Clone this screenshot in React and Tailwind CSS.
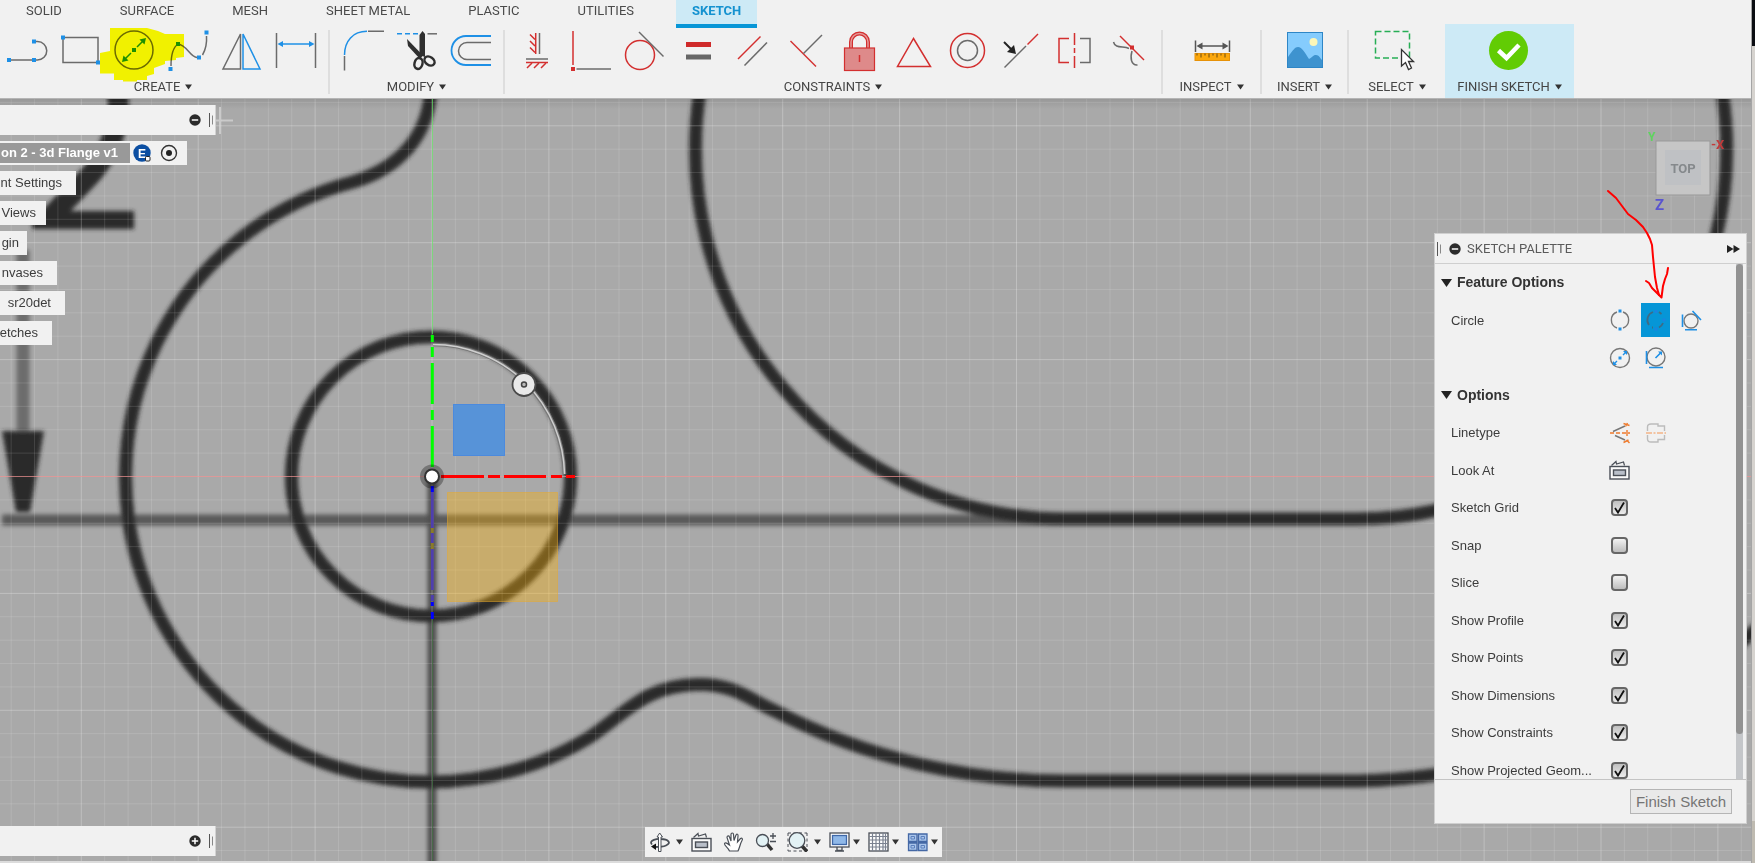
import React from "react";

const GRAY = "#6b6b6b";
const BLUE = "#1e90e6";
const RED = "#d32f2f";

const TABS = ["SOLID", "SURFACE", "MESH", "SHEET METAL", "PLASTIC", "UTILITIES", "SKETCH"];

/* Small square grip centred on a point */
function Dot({ x, y, c = BLUE }) {
  return <rect x={x - 2} y={y - 2} width="4" height="4" fill={c} />;
}

/* Tool icons share one toolbar-wide coordinate space; cx is the icon's centre in it */
function Tool({ name, cx, children }) {
  return (
    <button type="button" aria-label={name} className="block h-11 w-[54px] shrink-0">
      <svg width="54" height="44" viewBox={`${cx - 27} 29 54 44`} fill="none" strokeWidth="1.5">
        {children}
      </svg>
    </button>
  );
}

function Caret() {
  return (
    <svg width="7" height="6" viewBox="0 0 7 6" className="shrink-0">
      <path d="M0 0.5H7L3.5 5.5Z" fill="#333" />
    </svg>
  );
}

function Group({ label, className = "", children }) {
  return (
    <section className={`flex shrink-0 flex-col items-center pb-[3px] pt-[5px] ${className}`}>
      <div className="flex">{children}</div>
      <button type="button" className="mt-1.5 flex h-4 items-center gap-[5px] whitespace-nowrap text-[13px] leading-4 text-[#454545]">
        {label}
        <Caret />
      </button>
    </section>
  );
}

function Separator() {
  return <div className="mt-1.5 h-16 w-0.5 shrink-0 bg-[#dedede]" />;
}

function CreateTools() {
  return (
    <>
      <Tool name="Line" cx={28}>
        <path d="M9 60H34M36 41.500H37.500a9.250 9.250 0 0 1 0 18.500H36" stroke={GRAY} />
        <Dot x={9} y={60} /><Dot x={34} y={60} /><Dot x={34} y={41.5} />
      </Tool>
      <Tool name="Rectangle" cx={82}>
        <rect x="63" y="37.500" width="35" height="25" stroke={GRAY} />
        <Dot x={63} y={37.5} /><Dot x={98} y={62.5} />
      </Tool>
      <Tool name="Circle" cx={136}>
        <circle cx="134" cy="50" r="19" stroke={GRAY} />
        <path d="M125 59L131 53M137 47L143 41" stroke={BLUE} />
        <path d="M146 38l-1.500 6.500-5-5zM122 62l1.500-6.500 5 5z" fill={BLUE} />
        <Dot x={134} y={50} />
      </Tool>
      <Tool name="Spline" cx={190}>
        <path d="M171 66C171 56 173.500 47 178 44C187 45 190 57 197 57.500M202.500 55C206 49 207 43 206.500 36" stroke={GRAY} />
        <Dot x={170.5} y={69} /><Dot x={178} y={44} /><Dot x={199} y={57.5} /><Dot x={206.5} y={32.5} />
      </Tool>
      <Tool name="Mirror" cx={244}>
        <path d="M223 69H240.500V34Z" stroke={GRAY} />
        <path d="M260 69H243V34Z" stroke={BLUE} />
      </Tool>
      <Tool name="Sketch Dimension" cx={298}>
        <path d="M276.500 33V68M315.500 33V68" stroke={GRAY} />
        <path d="M280 44H312" stroke={BLUE} />
        <path d="M277.500 44l5.500-3v6zM314.500 44l-5.500-3v6z" fill={BLUE} />
      </Tool>
    </>
  );
}

function ModifyTools() {
  return (
    <>
      <Tool name="Fillet" cx={363}>
        <path d="M344.500 70.500V56M368 31.300H384" stroke={GRAY} />
        <path d="M344.500 55C344.500 41 353 31.300 367 31.300" stroke={BLUE} />
      </Tool>
      <Tool name="Trim" cx={417}>
        <path d="M397 33.800H421" stroke={BLUE} strokeDasharray="5 3" />
        <path d="M427.500 33.800H437" stroke={GRAY} />
        <path d="M407 39L423 55.500L420 59L408 46Z" fill="#2f2f2f" />
        <path d="M422.500 31L425 34V57L419.500 55V35Z" fill="#2f2f2f" />
        <ellipse cx="418.500" cy="63.500" rx="4" ry="5.500" stroke="#2f2f2f" strokeWidth="2.500" transform="rotate(15 418.500 63.500)" />
        <ellipse cx="429.500" cy="61" rx="5.500" ry="4" stroke="#2f2f2f" strokeWidth="2.500" transform="rotate(35 429.500 61)" />
      </Tool>
      <Tool name="Offset" cx={471}>
        <path d="M491 36H466a14.500 14.500 0 0 0 0 29H491" stroke={BLUE} strokeWidth="1.800" />
        <path d="M491 42.500H467a8.500 8.500 0 0 0 0 17H491" stroke={GRAY} />
      </Tool>
    </>
  );
}

function ConstraintTools() {
  return (
    <>
      <Tool name="Horizontal/Vertical" cx={537}>
        <path d="M536.700 33V54M527 62.500H549" stroke={RED} />
        <path d="M531 34.500l5 5M531 41l5 5M531 47.500l5 5M533 63l-5 5M540 63l-5 5M547 63l-5 5" stroke={RED} />
        <path d="M540.500 33V54M527 59H549" stroke={GRAY} />
      </Tool>
      <Tool name="Coincident" cx={591}>
        <path d="M574 31V65" stroke={RED} />
        <path d="M577.500 69H612" stroke={GRAY} />
        <Dot x={574} y={69} c={RED} />
      </Tool>
      <Tool name="Tangent" cx={645}>
        <circle cx="641" cy="55" r="14.500" stroke={RED} />
        <path d="M640 32L664.500 56.500" stroke={GRAY} />
      </Tool>
      <Tool name="Equal" cx={699}>
        <path d="M687 44.500H712" stroke="#cf2a2a" strokeWidth="5" />
        <path d="M687 57H712" stroke="#666" strokeWidth="5" />
      </Tool>
      <Tool name="Parallel" cx={753}>
        <path d="M739 59L761.500 36.500" stroke={RED} />
        <path d="M745.500 65.500L768 42.500" stroke={GRAY} />
      </Tool>
      <Tool name="Perpendicular" cx={807}>
        <path d="M791.500 41L817 66.500" stroke={RED} />
        <path d="M804.500 53.500L823 35" stroke={GRAY} />
      </Tool>
      <Tool name="Fix/Unfix" cx={861}>
        <path d="M852 48V42a8.500 8.500 0 0 1 17 0V48" stroke={RED} strokeWidth="4" />
        <path d="M852 48V42a8.500 8.500 0 0 1 17 0V48" stroke="#e59a9a" strokeWidth="1.500" />
        <rect x="845.500" y="48" width="30" height="22.500" fill="#de8a8a" stroke={RED} strokeWidth="1.200" />
        <path d="M860.500 55V62" stroke={RED} />
      </Tool>
      <Tool name="Midpoint" cx={915}>
        <path d="M914.500 38.500L931.500 66.500H898.500Z" stroke={RED} />
      </Tool>
      <Tool name="Concentric" cx={969}>
        <circle cx="968.500" cy="50.500" r="17" stroke={RED} />
        <circle cx="968.500" cy="50.500" r="10" stroke={GRAY} />
      </Tool>
      <Tool name="Collinear" cx={1023}>
        <path d="M1005.500 67.500L1027 46" stroke={GRAY} />
        <path d="M1028.500 44.500L1039 34" stroke={RED} />
        <path d="M1005 42L1012 49" stroke="#222" strokeWidth="2" />
        <path d="M1017 54l-2-9-7 7z" fill="#222" />
      </Tool>
      <Tool name="Symmetry" cx={1077}>
        <path d="M1070 38.500H1060V62.500H1070M1075.500 33V45M1075.500 48V53M1075.500 56V68" stroke={RED} />
        <path d="M1081 38.500H1091V62.500H1081" stroke={GRAY} />
      </Tool>
      <Tool name="Curvature" cx={1131}>
        <path d="M1114.500 42C1116 48.500 1124 46 1130 48.500M1133 51C1131 58 1132 65.500 1138.500 65" stroke={GRAY} />
        <path d="M1121 36L1145 60" stroke={RED} />
        <Dot x={1133} y={47.5} c={RED} />
      </Tool>
    </>
  );
}

function Header() {
  return (
    <header className="shrink-0 overflow-hidden border-b border-[#b5b5b5] bg-[#f1f1f1] font-[Roboto,sans-serif]">
      <nav className="flex gap-[26px] pl-2.5 text-[13px] leading-[21px] text-[#4a4a4a]">
        {TABS.map((t) => (
          <a
            key={t}
            href={`#${t.toLowerCase().replace(" ", "-")}`}
            className={
              t === "SKETCH"
                ? "h-7 whitespace-nowrap border-b-4 border-[#0696d7] bg-[#cdeaf6] px-4 font-bold text-[#1492d0]"
                : "h-7 whitespace-nowrap px-4"
            }
          >
            {t}
          </a>
        ))}
      </nav>
      <div className="-mt-1 flex">
        <div className="relative">
          <Group label="CREATE" className="w-[328px] pl-px pr-[3px]">
            <CreateTools />
          </Group>
          {/* Marker highlight over the circle tool */}
          <svg className="pointer-events-none absolute left-[100px] top-1 mix-blend-multiply" width="84" height="54" viewBox="100 28 84 54">
            <path d="M110 28H147L158 31L165 34H184V57L176 58V60L165 61V64L154 68V74L147 76V80H137V81.500H123V80H114V73.500H100V53L110 51Z" fill="#ffff00" />
          </svg>
        </div>
        <Separator />
        <Group label="MODIFY" className="w-[173px]"><ModifyTools /></Group>
        <Separator />
        <Group label="CONSTRAINTS" className="w-[656px]"><ConstraintTools /></Group>
        <Separator />
        <Group label="INSPECT" className="w-[97px]">
          <Tool name="Measure" cx={1212}>
            <path d="M1195.500 40.500V52M1229.500 40.500V52M1198 46H1227" stroke="#555" />
            <path d="M1196.500 46l6-3.500v7zM1228.500 46l-6-3.500v7z" fill="#555" />
            <rect x="1195" y="53.500" width="34.500" height="7" fill="#fba70c" stroke="#e79208" strokeWidth="1" />
            <path d="M1197 53.500v2M1201 53.500v4M1205 53.500v2M1209 53.500v4M1213 53.500v2M1217 53.500v4M1221 53.500v2M1225 53.500v4" stroke="#6b4a10" strokeWidth="1" />
          </Tool>
        </Group>
        <Separator />
        <Group label="INSERT" className="w-[85px]">
          <Tool name="Insert Canvas" cx={1304}>
            <rect x="1286.500" y="32.500" width="35" height="35" fill="#85ccfd" stroke="#2e86c6" strokeWidth="1" />
            <path d="M1287 57C1292 50 1294 47 1297 47C1301 47 1304 53 1308 59C1312 57 1312 55 1315 55C1318 55 1319 58 1321 60V67H1287Z" fill="#3e93cf" />
            <circle cx="1312.500" cy="42" r="4" fill="#fdf7b8" />
          </Tool>
        </Group>
        <Separator />
        <Group label="SELECT" className="w-[96px]">
          <Tool name="Select" cx={1397}>
            <rect x="1375.500" y="31.500" width="34" height="26.500" stroke="#27ae55" strokeDasharray="6 3" />
            <path d="M1401.500 49.500V66l4-3.500 3 7 3-1.500-3-6.500h5z" fill="#fff" stroke="#333" strokeWidth="1.300" />
          </Tool>
        </Group>
        <Group label="FINISH SKETCH" className="w-[129px] bg-[#cdeaf6]">
          <Tool name="Finish Sketch" cx={1510}>
            <circle cx="1508.500" cy="50.500" r="19.500" fill="#62cc04" />
            <path d="M1498.500 50.500l8 7.500 12.500-13" stroke="#fff" strokeWidth="4.500" />
          </Tool>
        </Group>
      </div>
    </header>
  );
}

function gridLines(origin, from, to) {
  const step = 23.38;
  const out = [];
  for (let k = Math.ceil((from - origin) / step); origin + k * step < to; k++) {
    out.push({ p: origin + k * step, major: k % 5 === 0 });
  }
  return out;
}

function Canvas() {
  return (
    <svg className="absolute inset-0 h-full w-full" viewBox="0 99 1751 762" preserveAspectRatio="xMidYMid slice" fill="none">
      <defs>
        <filter id="soft" x="0" y="80" width="1780" height="800" filterUnits="userSpaceOnUse">
          <feGaussianBlur stdDeviation="2" />
        </filter>
        <linearGradient id="topShade" x1="0" y1="0" x2="0" y2="1">
          <stop offset="0" stopColor="#000" stopOpacity="0.1" />
          <stop offset="1" stopColor="#000" stopOpacity="0" />
        </linearGradient>
      </defs>
      <rect x="0" y="99" width="1751" height="764" fill="#a9a9a9" />
      {/* Scanned gasket drawing */}
      <g filter="url(#soft)" stroke="#292929" strokeWidth="13">
        <path d="M23 250V432" stroke="#6c6c6c" />
        <path d="M2 520H1060" stroke="#5a5a5a" strokeWidth="11" />
        <path d="M432 478V880" stroke="#505050" strokeWidth="9" />
        <path d="M2 431H44L30 512H16Z" fill="#292929" stroke="none" />
        <path d="M112 80C124 100 120 138 93 172C75 192 60 206 46 222" strokeWidth="21" />
        <path d="M32 220H134" strokeWidth="18" />
        <path d="M431 85C430 135 400 168 353 182A305 305 0 1 0 590 737C625 714 645 685 698 684.500C735 684 750 700 775 711A633 633 0 0 0 1066 781H1359A633 633 0 0 0 1780 608" />
        <path d="M701 85A370 370 0 0 0 1066 519H1357A370 370 0 0 0 1721 85" />
        <circle cx="431" cy="476.500" r="139.500" />
      </g>
      <g stroke="#fff" strokeWidth="1">
        {gridLines(432, 0, 1751).map((l) => (
          <path key={`v${l.p}`} d={`M${l.p} 99V863`} strokeOpacity={l.major ? 0.26 : 0.13} />
        ))}
        {gridLines(476.5, 99, 863).map((l) => (
          <path key={`h${l.p}`} d={`M0 ${l.p}H1751`} strokeOpacity={l.major ? 0.26 : 0.13} />
        ))}
      </g>
      <rect x="0" y="99" width="1751" height="10" fill="url(#topShade)" />
      <path d="M0 476.500H1751" stroke="#f08080" strokeOpacity="0.6" />
      <path d="M432.500 99V334" stroke="#5fe65f" strokeOpacity="0.65" />
      <path d="M432.500 619V863" stroke="#3a6b3a" strokeOpacity="0.7" />
      <path d="M220 107V134M215 120.500H233" stroke="#d8d8d8" strokeWidth="2" strokeOpacity="0.7" />

      {/* Selection planes, axes and drag handles */}
      <rect x="453.500" y="404.500" width="51" height="51" fill="#5793d8" stroke="#4b8ade" />
      <rect x="447.500" y="492.500" width="110" height="109" fill="#fcb20a" fillOpacity="0.38" stroke="#e9a92a" strokeOpacity="0.5" />
      <path d="M433 344.500A132 132 0 0 1 564.500 474" stroke="#777" strokeWidth="3.500" />
      <path d="M433 344.500A132 132 0 0 1 564.500 474" stroke="#cfcfcf" strokeWidth="1.500" />
      <g strokeWidth="3">
        <path d="M432.300 335V342M432.300 347V357M432.300 363V404M432.300 410V420M432.300 426V467" stroke="#00ff00" />
        <path d="M441 476.500H484M488 476.500H500M504 476.500H546M551 476.500H562M566 476.500H575" stroke="#ff0000" />
        <path d="M432.300 492V590" stroke="#8a7a2a" />
        <path d="M432.300 492V528M432.300 533V543M432.300 549V590M432.300 595V601" stroke="#4e3fae" />
        <path d="M432.300 486V492M432.300 602V606M432.300 612V619" stroke="#0000ff" />
      </g>
      <circle cx="432" cy="476.500" r="12" fill="#000" fillOpacity="0.3" />
      <circle cx="432" cy="476.500" r="7" fill="#fff" stroke="#333" strokeWidth="2" />
      <circle cx="524" cy="384.500" r="11.500" fill="#e9e9e9" stroke="#4a4a4a" strokeWidth="1.800" />
      <circle cx="524" cy="384.500" r="2.500" fill="#bbb" stroke="#444" strokeWidth="1.500" />
    </svg>
  );
}

function ToggleDot({ plus }) {
  return (
    <svg width="12" height="12" viewBox="0 0 12 12" stroke="#fff" strokeWidth="1.500">
      <circle cx="6" cy="6" r="5.700" fill="#2b2b2b" stroke="none" />
      <path d={plus ? "M2.800 6H9.200M6 2.800V9.200" : "M2.800 6H9.200"} />
    </svg>
  );
}

function Grip() {
  return (
    <svg width="4" height="14" viewBox="0 0 4 14" stroke="#555">
      <path d="M0.500 0V14" />
      <path d="M3.500 2.500V11.500" stroke="#888" />
    </svg>
  );
}

function DockBar({ plus, name, className }) {
  return (
    <div className={`flex h-[30px] w-[216px] items-center justify-end gap-2 border-r border-[#d2d2d2] bg-[#f1f1f1] pr-0.5 ${className}`}>
      <button type="button" aria-label={name}><ToggleDot plus={plus} /></button>
      <Grip />
    </div>
  );
}

const NODES = [
  ["nt Settings", "w-[76px] pr-3.5"],
  ["Views", "w-[46px] pr-2.5"],
  ["gin", "w-[27px] pr-2"],
  ["nvases", "w-[57px] pr-3.5"],
  ["sr20det", "w-[65px] pr-3.5"],
  ["etches", "w-[52px] pr-3.5"],
];

function Browser() {
  return (
    <aside className="absolute left-0 top-1.5 text-[13px] text-[#3c3c3c]">
      <DockBar name="Collapse browser" className="mb-1.5" />
      <div className="flex flex-col items-start gap-1.5">
        <div className="flex h-6 w-[187px] items-center bg-[#f1f1f1]">
          <div className="flex h-5 w-[130px] items-center justify-end overflow-hidden whitespace-nowrap bg-[#999] pr-3 font-bold text-white">
            on 2 - 3d Flange v1
          </div>
          <svg className="ml-[3px]" width="18" height="18" viewBox="0 0 18 18">
            <circle cx="9" cy="9" r="8.700" fill="#0b4ea2" />
            <text x="9" y="13.500" textAnchor="middle" fontSize="12" fontWeight="bold" fill="#fff">E</text>
            <rect x="12.500" y="12.500" width="4.500" height="4.500" rx="1" fill="#fff" stroke="#222" />
          </svg>
          <svg className="ml-[9px]" width="18" height="18" viewBox="0 0 18 18" fill="none">
            <circle cx="9" cy="9" r="7.500" stroke="#333" strokeWidth="1.400" />
            <circle cx="9" cy="9" r="3" fill="#222" />
          </svg>
        </div>
        {NODES.map(([t, cls]) => (
          <button key={t} type="button" className={`flex h-6 items-center justify-end overflow-hidden whitespace-nowrap bg-[#f1f1f1] ${cls}`}>
            {t}
          </button>
        ))}
      </div>
    </aside>
  );
}

function ViewCube() {
  return (
    <svg className="absolute right-5 top-[30px]" width="90" height="84" viewBox="1641 129 90 84" fontFamily="Roboto, sans-serif" fontWeight="bold">
      <text x="1648" y="141" fontSize="12" fill="#5fd35f">Y</text>
      <text x="1711" y="149" fontSize="13" fill="#c23b3b">-X</text>
      <text x="1655" y="210" fontSize="15" fill="#5a55cf">Z</text>
      <rect x="1656" y="141" width="54" height="54" fill="#c6c6c6" stroke="#999" />
      <rect x="1665" y="150" width="36" height="35" fill="#bfc1c4" />
      <text x="1683" y="173" textAnchor="middle" fontSize="13" fill="#85898c">TOP</text>
    </svg>
  );
}

function PickButton({ name, active, children }) {
  return (
    <button
      type="button"
      aria-label={name}
      aria-pressed={!!active}
      className={`flex h-[34px] w-[29px] items-center justify-center ${active ? "bg-[#0696d7]" : ""}`}
    >
      <svg width="26" height="22" viewBox="0 0 26 22" fill="none" strokeWidth="1.400">{children}</svg>
    </button>
  );
}

function CheckRow({ label, checked }) {
  const id = label.replace(/\W/g, "");
  return (
    <div className="flex items-center">
      <label htmlFor={id} className="w-[160px] whitespace-nowrap">{label}</label>
      <span className="grid">
        <input
          id={id}
          type="checkbox"
          defaultChecked={checked}
          className="peer col-start-1 row-start-1 h-[17px] w-[17px] appearance-none rounded-[4px] border-2 border-[#666] bg-linear-to-b from-[#f3f3f3] to-[#bdbdbd] checked:from-[#c0c0c0] checked:to-[#ececec]"
        />
        <svg className="pointer-events-none invisible col-start-1 row-start-1 peer-checked:visible" width="17" height="17" viewBox="0 0 17 17" fill="none">
          <path d="M4 9l3 4.500L13 3.500" stroke="#111" strokeWidth="1.800" />
        </svg>
      </span>
    </div>
  );
}

function SectionTitle({ children }) {
  return (
    <button type="button" className="-ml-[10px] flex items-center gap-[5px] text-[14px] font-bold text-[#333]">
      <svg width="11" height="8" viewBox="0 0 11 8"><path d="M0 0H11L5.500 8Z" fill="#222" /></svg>
      {children}
    </button>
  );
}

const CHECKS = [
  ["Sketch Grid", true],
  ["Snap", false],
  ["Slice", false],
  ["Show Profile", true],
  ["Show Points", true],
  ["Show Dimensions", true],
  ["Show Constraints", true],
  ["Show Projected Geom...", true],
];

function BoxIcon() {
  return (
    <svg width="21" height="20" viewBox="0 0 21 20" fill="none" stroke="#4a4f57" strokeWidth="1.400">
      <rect x="1" y="6.500" width="19" height="12.500" fill="#fbfbfb" />
      <rect x="4.500" y="10" width="12" height="5.500" fill="#b9bfc9" />
      <path d="M2.500 5.500L7 1.500L7.500 4L14.500 2L15.500 5.500" strokeWidth="1.200" />
    </svg>
  );
}

function Palette() {
  return (
    <aside className="absolute right-1 top-[134px] w-[313px] border border-[#cfcfcf] bg-[#f1f1f1] text-[13px] text-[#3c3c3c]">
      <div className="flex h-[30px] items-center border-b border-[#cfcfcf] pl-0.5 pr-1.5 font-[Roboto,sans-serif] text-[#5a5a5a]">
        <Grip />
        <button type="button" aria-label="Collapse palette" className="ml-2 mr-1.5"><ToggleDot /></button>
        SKETCH PALETTE
        <svg className="ml-auto" width="13" height="8" viewBox="0 0 13 8" fill="#222"><path d="M0 0L6.500 4L0 8ZM6.500 0L13 4L6.500 8Z" /></svg>
      </div>
      <div className="flex h-[515px] overflow-hidden">
        <div className="grid h-[525px] flex-1 auto-rows-fr items-center pl-4">
          <SectionTitle>Feature Options</SectionTitle>
          <div className="flex items-center">
            <span className="w-[154px]">Circle</span>
            <div className="flex gap-[7px]">
              <PickButton name="2-Point Circle">
                <path d="M10 3A8.500 8.500 0 0 0 10 19M16 3A8.500 8.500 0 0 1 16 19" stroke="#777" />
                <path d="M11.500 0.500h3v3h-3zM11.500 18.500h3v3h-3z" fill={BLUE} />
              </PickButton>
              <PickButton name="3-Point Circle" active>
                <path d="M10 3A8.500 8.500 0 0 0 6 16M9 18.500H10M16 3L18.500 5M20 14A8.500 8.500 0 0 1 16 18.500" stroke="#3f6b85" strokeWidth="1.800" />
                <path d="M11.500 1h3v3h-3zM11.500 18.500h3v3h-3zM19.500 9.500h3v3h-3z" fill="#1b84e0" />
              </PickButton>
              <PickButton name="3-Tangent Circle">
                <circle cx="12" cy="12" r="7" stroke="#777" />
                <path d="M3.500 5.500V18M6 20.800H18M13.500 2L22 11" stroke={BLUE} strokeWidth="1.600" />
              </PickButton>
            </div>
          </div>
          <div className="ml-[154px] flex gap-[7px]">
            <PickButton name="Center Diameter Circle">
              <circle cx="13" cy="11" r="9.500" stroke="#777" />
              <path d="M7 17L10 14M16 8L19.500 4.500" stroke={BLUE} />
              <path d="M20 4v4l-4-4zM6 18v-4l4 4z" fill={BLUE} />
              <path d="M11.500 9.500h3v3h-3z" fill={BLUE} />
            </PickButton>
            <PickButton name="2-Tangent Circle">
              <circle cx="13" cy="10" r="9" stroke="#777" />
              <path d="M3.500 4V17M6 20.500H20M12.500 11L18 5.500" stroke={BLUE} strokeWidth="1.600" />
              <path d="M19 4.500v4l-4-4z" fill={BLUE} />
            </PickButton>
          </div>
          <SectionTitle>Options</SectionTitle>
          <div className="flex items-center">
            <span className="w-[154px]">Linetype</span>
            <div className="flex gap-[7px]">
              <PickButton name="Construction">
                <path d="M6 9.500L18 4M8 13.500L18 18" stroke="#777" />
                <path d="M3 11H23" stroke="#ee7a2c" strokeWidth="1.600" strokeDasharray="4 2" />
                <path d="M20 8V14M16.500 1.500L22.500 3.500M20.500 1L18.500 4.500M16.500 20.500L21.500 18M19.500 18L22.500 21" stroke="#ee7a2c" />
              </PickButton>
              <PickButton name="Centerline">
                <path d="M4.500 9V5Q4.500 2 8 2H15V4H21.500V9M4.500 13V17Q4.500 20 8 20H15V17.500H21.500V13" stroke="#bcbcbc" />
                <path d="M3 11H23" stroke="#f3b487" strokeDasharray="6 1.500 2 1.500" />
              </PickButton>
            </div>
          </div>
          <div className="flex items-center">
            <span className="w-[158px]">Look At</span>
            <button type="button" aria-label="Look At"><BoxIcon /></button>
          </div>
          {CHECKS.map(([l, c]) => <CheckRow key={l} label={l} checked={c} />)}
        </div>
        <div className="mr-[3px] w-[7px] bg-[#c4c6c9]">
          <div className="h-[470px] rounded-full bg-[#929292]" />
        </div>
      </div>
      <footer className="flex h-11 items-center justify-end border-t border-[#c4c4c4] pr-3.5">
        <button type="button" className="h-[25px] whitespace-nowrap border border-[#b5b5b5] bg-[#e9e9e9] px-[5px] text-[15px] leading-none text-[#757575]">
          Finish Sketch
        </button>
      </footer>
    </aside>
  );
}

function Annotation() {
  return (
    <svg className="pointer-events-none absolute right-[76px] top-[88px]" width="68" height="114" viewBox="1607 187 68 114" fill="none" stroke="#ff0000" strokeWidth="2" strokeLinejoin="round" strokeLinecap="round">
      <path d="M1608 191L1616 198L1622 206L1628 214L1636 220L1643 227L1647 233L1650 239L1652 245L1653 257L1655 277L1657 288L1659 295" />
      <path d="M1646 281L1649 283L1652 288L1661.500 297.500L1663 286L1665 279L1667 274L1668 268" />
    </svg>
  );
}

function NavItem({ name, caret, className = "", children }) {
  return (
    <button type="button" aria-label={name} className={`flex items-center ${className}`}>
      <svg width="21" height="20" viewBox="0 0 21 20" fill="none" stroke="#4a4f57" strokeWidth="1.300">{children}</svg>
      {caret && <Caret />}
    </button>
  );
}

function NavBar() {
  return (
    <div className="absolute bottom-1 left-[645px] flex h-[30px] items-center gap-[11px] bg-[#f1f1f1] px-1">
      <NavItem name="Orbit" caret className="gap-1.5">
        <path d="M3 12.500C-1 8 9 6.500 12 7C19 7 23 11 17 13.500C14 14.800 10 15 6 15" strokeWidth="1.800" />
        <path d="M2 14.500l5-3v6.500z" fill="#111" stroke="none" />
        <path d="M9.500 19.500V5H8L10.700 1L13.500 5H12V19.500Z" fill="#fff" strokeWidth="1" />
      </NavItem>
      <button type="button" aria-label="Look At" className="-ml-[3px]"><BoxIcon /></button>
      <NavItem name="Pan">
        <path d="M6.500 19C5 15.500 1 13.500 1.500 11.500C2.500 10 5 12 6.500 13L4 5.500C4 3.500 6 3.500 6.500 5L8 9L8 2.500C8 0.500 10.500 0.500 10.500 2.500L11 8.500L13 3C13.500 1.500 15.500 2 15 4L14.500 10L17.500 6.500C19 5.500 20 7 19 8.500C17 12 17 15 15 19Z" fill="#fff" strokeWidth="1.200" />
      </NavItem>
      <NavItem name="Zoom">
        <path d="M12 12L17 18" stroke="#333" strokeWidth="3.500" />
        <circle cx="7.500" cy="8.500" r="6" fill="#e3f2f5" />
        <path d="M15 4H21M18 1V7M15 9.500H21" />
      </NavItem>
      <NavItem name="Fit" caret className="gap-1.5">
        <path d="M1 1H20M1 19H20M1 1V19M20 1V19" strokeDasharray="3 2.500" strokeWidth="1" />
        <path d="M15 14L20 19.500" stroke="#333" strokeWidth="3.500" />
        <circle cx="10" cy="8.500" r="7.800" fill="#e3f2f5" />
      </NavItem>
      <NavItem name="Display Settings" caret className="-ml-[3px] gap-[3px]">
        <rect x="1" y="1" width="19" height="14" fill="#fff" />
        <rect x="3.500" y="3.500" width="14" height="9" fill="#8fb8e8" stroke="#3f68a8" />
        <path d="M8 15V18.500H13V15M6 19H15" />
      </NavItem>
      <NavItem name="Grid and Snaps" caret className="-ml-[3px] gap-[3px]">
        <rect x="1" y="1" width="19" height="18" fill="#fff" />
        <path d="M4.500 1V19M8 1V19M11.500 1V19M15 1V19M17.500 1V19M1 4.500H20M1 8H20M1 11.500H20M1 15H20" stroke="#7b8290" strokeWidth="1.200" />
      </NavItem>
      <NavItem name="Viewports" caret className="-ml-[3px] gap-[3px]">
        <path d="M1.500 2H10V9.500H1.500ZM11.500 2H20V9.500H11.500ZM1.500 11H10V18.500H1.500ZM11.500 11H20V18.500H11.500Z" fill="#a9c4ea" stroke="#4468a5" />
        <path d="M4 4.500H7.500V7H4ZM14 4.500H17.500V7H14ZM4 13.500H7.500V16H4ZM14 13.500H17.500V16H14Z" stroke="#5b80bd" strokeWidth="1" />
      </NavItem>
    </div>
  );
}

export default function App() {
  return (
    <div className="flex min-h-screen font-['Liberation_Sans',Arial,sans-serif]">
      <div className="flex min-w-0 flex-1 flex-col">
        <Header />
        <main className="relative min-h-[740px] flex-1 overflow-hidden border-b-2 border-[#dcdcdc]">
          <Canvas />
          <Browser />
          <DockBar plus name="Expand comments" className="absolute bottom-[5px] left-0" />
          <ViewCube />
          <Palette />
          <Annotation />
          <NavBar />
        </main>
      </div>
      <div className="flex w-1 shrink-0 flex-col border-l border-[#a5a5a5] bg-[#d6d3cf]">
        <div className="h-[46px] bg-[#0b0d12]" />
        <div className="mt-auto h-[42px] bg-[#bfbbb1]" />
      </div>
    </div>
  );
}
